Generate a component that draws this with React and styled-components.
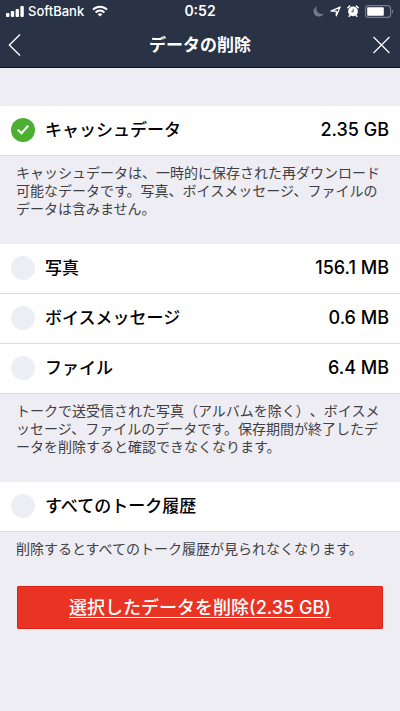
import React, { useState } from "react";
import styled, { createGlobalStyle } from "styled-components";

const GlobalStyle = createGlobalStyle`
  *, *::before, *::after { box-sizing: border-box; }
  body {
    margin: 0;
    background: #eeedf3;
    color: #000;
    font-family: Inter, "Noto Sans CJK JP", sans-serif;
    font-size: 17px;
    text-spacing-trim: space-all;
  }
  button { font: inherit; color: inherit; border: 0; padding: 0; cursor: pointer; }
  svg { display: block; }
`;

const Header = styled.header`
  background: #2a3246;
  border-bottom: 1px solid #0c1028;
  color: #fff;
`;

const StatusBar = styled.div`
  display: grid;
  grid-template-columns: 1fr auto 1fr;
  align-items: center;
  height: 22px;
  padding: 0 6px;
`;

const StatusGroup = styled.div`
  display: flex;
  align-items: center;
  gap: ${({ $gap }) => $gap}px;
  justify-content: ${({ $end }) => ($end ? "flex-end" : "flex-start")};
`;

const Carrier = styled.span`
  font-size: 13px;
  font-weight: 500;
  line-height: 20px;
  margin-right: 4px;
`;

const Clock = styled.time`
  font-size: 14px;
  font-weight: 600;
  line-height: 20px;
`;

const NavBar = styled.nav`
  display: grid;
  grid-template-columns: 40px 1fr 40px;
  align-items: center;
  height: 45px;
`;

const Title = styled.h1`
  margin: 0;
  font-size: 17px;
  font-weight: 700;
  line-height: 24px;
  text-align: center;
`;

const IconButton = styled.button`
  display: flex;
  align-items: center;
  justify-content: ${({ $end }) => ($end ? "flex-end" : "flex-start")};
  height: 40px;
  padding: 0 8px;
  background: none;
`;

const Content = styled.main`
  padding-top: 38px;
`;

const Row = styled.label`
  display: flex;
  align-items: center;
  height: 50px;
  padding: 0 11px 1px;
  background: #fff;
  border-bottom: 1px solid #dcdce0;
  cursor: pointer;
`;

const Check = styled.input`
  appearance: none;
  flex: none;
  width: 24px;
  height: 24px;
  margin: 0 10px 0 0;
  border-radius: 50%;
  background: #edeef4;
  display: grid;
  place-items: center;

  &:checked { background: #4caf32; }
  &:checked::before {
    content: "";
    width: 6px;
    height: 11px;
    margin-bottom: 3px;
    border: solid #fff;
    border-width: 0 2px 2px 0;
    transform: rotate(42deg);
  }
`;

const RowName = styled.span`
  flex: 1;
  font-weight: 500;
  line-height: 24px;
`;

const RowSize = styled.span`
  font-size: 18px;
  font-weight: 500;
  line-height: 24px;
`;

const Note = styled.p`
  margin: 0;
  padding: 8px 16px ${({ $last }) => ($last ? 28 : 26)}px;
  color: #3f3f45;
  font-size: 14px;
  line-height: 18px;
  line-break: anywhere;
`;

const DeleteButton = styled.button`
  display: block;
  width: calc(100% - 34px);
  height: 43px;
  margin: 0 17px;
  background: #e93323;
  box-shadow: inset 0 0 0 1px #dc2018;
  border-radius: 2px;
`;

const DeleteText = styled.span`
  color: #fff;
  font-size: 18px;
  font-weight: 500;
  line-height: 26px;
  text-decoration: underline;
  text-decoration-thickness: 1px;
  text-underline-offset: 3px;
`;

const SignalIcon = () => (
  <svg width="18" height="11" viewBox="0 0 18 11" fill="#fff" aria-hidden="true">
    <rect x="0" y="7" width="3.4" height="4" rx="1" />
    <rect x="4.8" y="5" width="3.4" height="6" rx="1" />
    <rect x="9.6" y="3" width="3.4" height="8" rx="1" />
    <rect x="14.4" y="0" width="3.4" height="11" rx="1" />
  </svg>
);

const WifiIcon = () => (
  <svg width="16" height="12" viewBox="0 0 16 12" fill="none" stroke="#fff" strokeWidth="2" aria-hidden="true">
    <path d="M1 4.6C5 .7 11 .7 15 4.6" />
    <path d="M3.6 7.4C6.2 5 9.8 5 12.4 7.4" />
    <path d="M8 11.6 5.6 9.2c1.4-1.2 3.4-1.2 4.8 0Z" fill="#fff" stroke="none" />
  </svg>
);

const MoonIcon = () => (
  <svg width="11" height="11" viewBox="0 0 11 11" fill="#747989" aria-hidden="true">
    <path d="M4 .5A5.2 5.2 0 1 0 10.5 7.4 5 5 0 0 1 4 .5Z" />
  </svg>
);

const LocationIcon = () => (
  <svg width="11" height="11" viewBox="0 0 11 11" fill="none" stroke="#fff" strokeWidth="1.3" strokeLinejoin="round" aria-hidden="true">
    <path d="M10.1 1 6.3 9.8V5.1H1Z" />
  </svg>
);

const AlarmIcon = () => (
  <svg width="12" height="12" viewBox="0 0 12 12" aria-hidden="true">
    <circle cx="6" cy="6.4" r="4.9" fill="#fff" />
    <path d="M.9 2.8 2.6 1.1M11.1 2.8 9.4 1.1M2.9 10.4l-.7.9M9.1 10.4l.7.9" stroke="#fff" strokeWidth="1.5" strokeLinecap="round" />
    <path d="M6.2 3.8v2.9H4.4" fill="none" stroke="#2a3246" strokeWidth=".9" />
  </svg>
);

const BatteryIcon = () => (
  <svg width="29" height="13" viewBox="0 0 29 13" aria-hidden="true">
    <rect x=".6" y=".6" width="25" height="11.8" rx="3" fill="none" stroke="#777c8b" strokeWidth="1.1" />
    <rect x="2.2" y="2.2" width="16.6" height="8.6" rx="1" fill="#fff" />
    <path d="M26.8 4.5c1.8.5 1.8 3.5 0 4Z" fill="#777c8b" />
  </svg>
);

const BackIcon = () => (
  <svg width="14" height="22" viewBox="0 0 14 22" fill="none" stroke="#fff" strokeWidth="1.4" aria-hidden="true">
    <path d="M12 .6 1.4 11 12 21.4" />
  </svg>
);

const CloseIcon = () => (
  <svg width="20" height="20" viewBox="0 0 20 20" stroke="#fff" strokeWidth="1.2" aria-hidden="true">
    <path d="M1.5 2 17.5 18M17.5 2 1.5 18" />
  </svg>
);

const groups = [
  {
    items: [{ id: "cache", name: "キャッシュデータ", size: "2.35 GB" }],
    note: "キャッシュデータは、一時的に保存された再ダウンロード可能なデータです。写真、ボイスメッセージ、ファイルのデータは含みません。",
  },
  {
    items: [
      { id: "photo", name: "写真", size: "156.1 MB" },
      { id: "voice", name: "ボイスメッセージ", size: "0.6 MB" },
      { id: "file", name: "ファイル", size: "6.4 MB" },
    ],
    note: "トークで送受信された写真（アルバムを除く）、ボイスメッセージ、ファイルのデータです。保存期間が終了したデータを削除すると確認できなくなります。",
  },
  {
    items: [{ id: "history", name: "すべてのトーク履歴" }],
    note: "削除するとすべてのトーク履歴が見られなくなります。",
  },
];

export default function App() {
  const [selected, setSelected] = useState({ cache: true });
  const toggle = (id) => setSelected((s) => ({ ...s, [id]: !s[id] }));

  return (
    <>
      <GlobalStyle />
      <Header>
        <StatusBar>
          <StatusGroup $gap={4}>
            <SignalIcon />
            <Carrier>SoftBank</Carrier>
            <WifiIcon />
          </StatusGroup>
          <Clock>0:52</Clock>
          <StatusGroup $gap={6} $end>
            <MoonIcon />
            <LocationIcon />
            <AlarmIcon />
            <BatteryIcon />
          </StatusGroup>
        </StatusBar>
        <NavBar>
          <IconButton type="button" aria-label="戻る"><BackIcon /></IconButton>
          <Title>データの削除</Title>
          <IconButton type="button" aria-label="閉じる" $end><CloseIcon /></IconButton>
        </NavBar>
      </Header>
      <Content>
        {groups.map((group, i) => (
          <section key={group.items[0].id}>
            {group.items.map((item) => (
              <Row key={item.id}>
                <Check type="checkbox" checked={!!selected[item.id]} onChange={() => toggle(item.id)} />
                <RowName>{item.name}</RowName>
                {item.size && <RowSize>{item.size}</RowSize>}
              </Row>
            ))}
            <Note $last={i === groups.length - 1}>{group.note}</Note>
          </section>
        ))}
        <DeleteButton type="button"><DeleteText>選択したデータを削除(2.35 GB)</DeleteText></DeleteButton>
      </Content>
    </>
  );
}
